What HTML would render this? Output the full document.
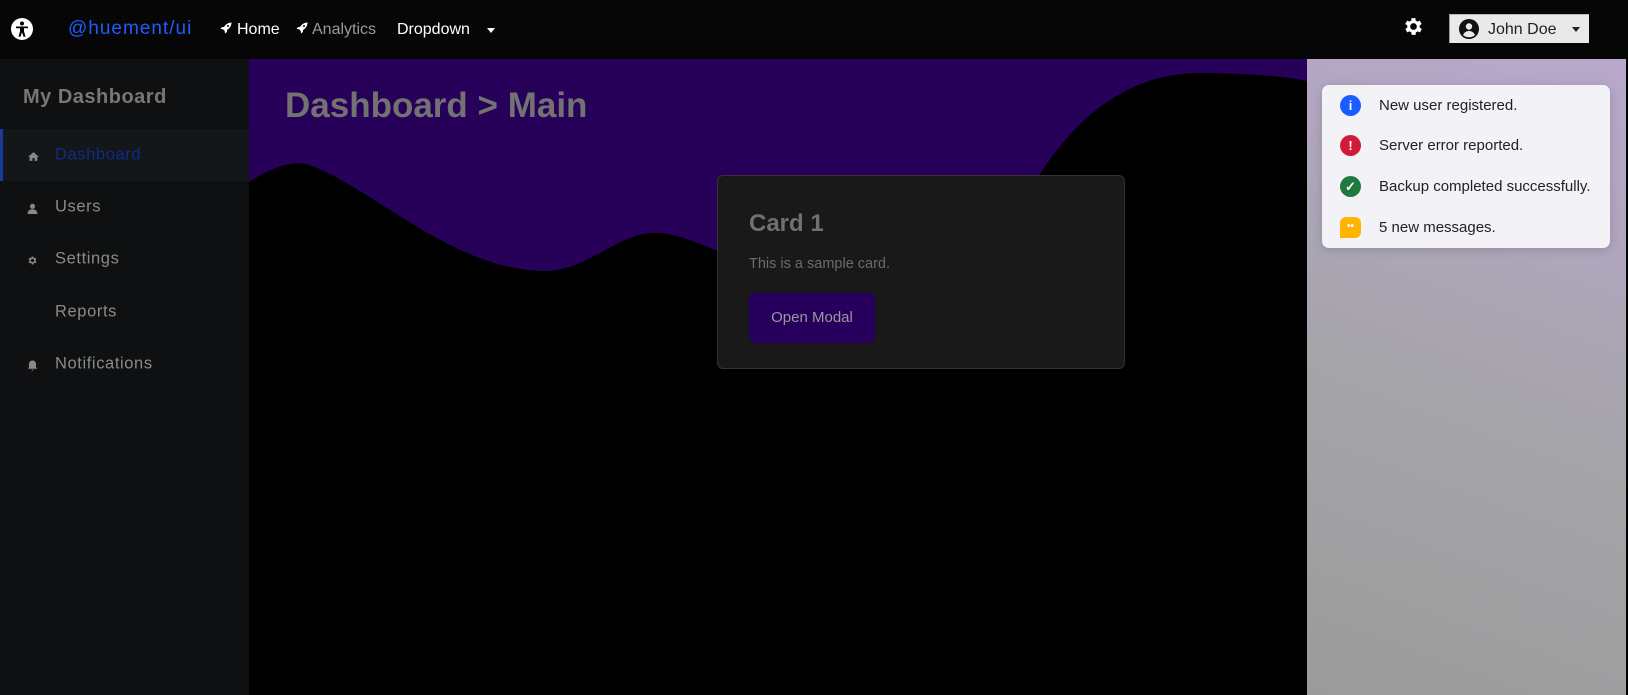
<!DOCTYPE html>
<html><head><meta charset="utf-8"><style>
*{box-sizing:border-box;margin:0;padding:0}
body{width:1628px;height:695px;overflow:hidden;background:#000;font-family:"Liberation Sans",sans-serif;position:relative}
.nav{position:absolute;left:0;top:0;width:1628px;height:59px;background:#060606}
.abs{position:absolute;white-space:nowrap}
.side{position:absolute;left:0;top:59px;width:249px;height:636px;background:#0e1012}
.item{position:absolute;left:0;width:249px;height:52px;font-size:16.5px;color:#8a8a8a;letter-spacing:.6px}
.item span{position:absolute;left:55px;top:50%;transform:translateY(-50%)}
.item svg{position:absolute;left:27px;top:22px}
.right{position:absolute;left:1307px;top:59px;width:319px;height:636px;background:linear-gradient(200deg,#b8a8cc 0%,#aea6ba 30%,#a5a4a8 55%,#9b9b9b 100%)}
.notif{position:absolute;left:1322px;top:85px;width:288px;height:163px;background:#f3f2f6;border-radius:7px;box-shadow:0 2px 10px rgba(0,0,0,.15)}
.n{position:absolute;left:57px;font-size:15px;color:#222}
.ic{position:absolute;left:18px;width:21px;height:21px;border-radius:50%;color:#fff;font-weight:bold;font-size:13px;text-align:center;line-height:21px}
</style></head><body>
<div class="nav">
  <svg class="abs" style="left:11px;top:18px" width="22" height="22" viewBox="0 0 22 22"><circle cx="11" cy="11" r="11" fill="#fff"/><circle cx="11" cy="5.5" r="2" fill="#000"/><path d="M5 8.5h12v1.8h-4v3l1.5 5.5h-2l-1.5-4.5-1.5 4.5h-2l1.5-5.5v-3H5z" fill="#000"/></svg>
  <div class="abs" style="left:68px;top:18px;font-size:19px;color:#1f5cff;letter-spacing:1px">@huement/ui</div>
  <svg class="abs" style="left:220px;top:22px" width="12" height="12" viewBox="0 0 12 12"><path d="M11.5.5C8 .5 5.5 2.5 4 5L2 5 .5 7l2.5.3L4.7 9l.3 2.5 2-1.5V8c2.5-1.5 4.5-4 4.5-7.5z" fill="#fff"/><circle cx="8" cy="4" r="1" fill="#060606"/></svg>
  <div class="abs" style="left:237px;top:21px;font-size:16px;color:#fff">Home</div>
  <svg class="abs" style="left:296px;top:22px" width="12" height="12" viewBox="0 0 12 12"><path d="M11.5.5C8 .5 5.5 2.5 4 5L2 5 .5 7l2.5.3L4.7 9l.3 2.5 2-1.5V8c2.5-1.5 4.5-4 4.5-7.5z" fill="#fff"/><circle cx="8" cy="4" r="1" fill="#060606"/></svg>
  <div class="abs" style="left:312px;top:21px;font-size:16px;color:#999">Analytics</div>
  <div class="abs" style="left:397px;top:21px;font-size:16px;color:#fff">Dropdown</div>
  <div class="abs" style="left:487px;top:28px;width:0;height:0;border-left:4px solid transparent;border-right:4px solid transparent;border-top:5px solid #fff"></div>
  <svg class="abs" style="left:1402px;top:15px" width="23" height="23" viewBox="0 0 24 24"><path fill="#fff" d="M19.4 13a7.5 7.5 0 0 0 0-2l2.1-1.6-2-3.5-2.5 1a7.6 7.6 0 0 0-1.7-1L15 3.3h-4l-.4 2.6a7.6 7.6 0 0 0-1.7 1l-2.5-1-2 3.5L6.6 11a7.5 7.5 0 0 0 0 2l-2.1 1.6 2 3.5 2.5-1a7.6 7.6 0 0 0 1.7 1l.4 2.6h4l.4-2.6a7.6 7.6 0 0 0 1.7-1l2.5 1 2-3.5zM13 15.5a3.5 3.5 0 1 1 0-7 3.5 3.5 0 0 1 0 7z" transform="translate(-1 0)"/></svg>
  <div class="abs" style="left:1449px;top:14px;width:140px;height:29px;background:#e9e9e9;border-top:1px solid #bbb;border-left:1px solid #999">
    <svg class="abs" style="left:9px;top:4px" width="20" height="20" viewBox="0 0 20 20"><circle cx="10" cy="10" r="10" fill="#111"/><circle cx="10" cy="7.5" r="3.2" fill="#e9e9e9"/><path d="M4 16c1.5-3 3.5-4 6-4s4.5 1 6 4c-1.5 1.5-3.5 2.2-6 2.2S5.5 17.5 4 16z" fill="#e9e9e9"/></svg>
    <div class="abs" style="left:38px;top:6px;font-size:16px;color:#222">John Doe</div>
    <div class="abs" style="left:122px;top:12px;width:0;height:0;border-left:4px solid transparent;border-right:4px solid transparent;border-top:5px solid #222"></div>
  </div>
</div>
<div class="side">
  <div class="abs" style="left:23px;top:27px;font-size:20px;font-weight:bold;color:#777;letter-spacing:.5px">My Dashboard</div>
  <div class="item" style="top:70px;background:#13171a;border-left:3px solid #1a3a9a"><svg width="11" height="11" viewBox="0 0 10 10" style="left:25px"><path d="M5 1L0 5.5h1.5V9h2.5V6.5h2V9h2.5V5.5H10z" fill="#888"/></svg><span style="left:52px;color:#0f2c85">Dashboard</span></div>
  <div class="item" style="top:122px"><svg width="11" height="11" viewBox="0 0 10 10"><circle cx="5" cy="3" r="2.3" fill="#888"/><path d="M0.5 10c0-3 2-4.3 4.5-4.3s4.5 1.3 4.5 4.3z" fill="#888"/></svg><span>Users</span></div>
  <div class="item" style="top:174px"><svg width="11" height="11" viewBox="0 0 24 24"><path fill="#888" d="M19.4 13a7.5 7.5 0 0 0 0-2l2.1-1.6-2-3.5-2.5 1a7.6 7.6 0 0 0-1.7-1L15 3.3h-4l-.4 2.6a7.6 7.6 0 0 0-1.7 1l-2.5-1-2 3.5L6.6 11a7.5 7.5 0 0 0 0 2l-2.1 1.6 2 3.5 2.5-1a7.6 7.6 0 0 0 1.7 1l.4 2.6h4l.4-2.6a7.6 7.6 0 0 0 1.7-1l2.5 1 2-3.5zM13 15.5a3.5 3.5 0 1 1 0-7 3.5 3.5 0 0 1 0 7z" transform="translate(-1 0)"/></svg><span>Settings</span></div>
  <div class="item" style="top:227px"><span>Reports</span></div>
  <div class="item" style="top:279px"><svg width="11" height="11" viewBox="0 0 10 10"><path d="M5 .5c-2 0-3.2 1.5-3.2 3.5v2.5L.8 8h8.4L8.2 6.5V4C8.2 2 7 .5 5 .5zM4 8.6h2a1 1 0 0 1-2 0z" fill="#888"/></svg><span>Notifications</span></div>
</div>
<svg class="abs" style="left:249px;top:59px" width="1058" height="636" viewBox="0 0 1058 636">
  <rect width="1058" height="636" fill="#27005a"/>
  <path d="M0,123 C20,110 40,102 57,105 C120,125 200,210 294,212 C340,213 370,170 412,174 C450,178 480,205 540,210 C640,215 730,200 791,115 C830,55 880,15 950,14 C1000,14 1040,18 1058,22 L1058,636 L0,636 Z" fill="#000"/>
</svg>
<div class="abs" style="left:285px;top:86px;font-size:35px;font-weight:bold;color:#727272">Dashboard &gt; Main</div>
<div class="abs" style="left:717px;top:175px;width:408px;height:194px;background:#191919;border:1px solid #333;border-radius:6px">
  <div class="abs" style="left:31px;top:34px;font-size:24px;font-weight:bold;color:#707070">Card 1</div>
  <div class="abs" style="left:31px;top:80px;font-size:14.5px;color:#6c6c6c">This is a sample card.</div>
  <div class="abs" style="left:31px;top:117px;width:126px;height:50px;background:#26005c;border-radius:6px;color:#999;font-size:15px;text-align:center;line-height:50px">Open Modal</div>
</div>
<div class="right"></div>
<div class="notif">
  <div class="ic" style="top:10px;background:#1a5cff">i</div><div class="n" style="top:12px">New user registered.</div>
  <div class="ic" style="top:50px;background:#d01a38">!</div><div class="n" style="top:52px">Server error reported.</div>
  <div class="ic" style="top:91px;background:#207a40">✓</div><div class="n" style="top:93px">Backup completed successfully.</div>
  <div class="ic" style="top:132px;background:#ffb400;border-radius:6px 6px 6px 0;font-size:10px;line-height:19px">••</div><div class="n" style="top:134px">5 new messages.</div>
</div>
</body></html>
